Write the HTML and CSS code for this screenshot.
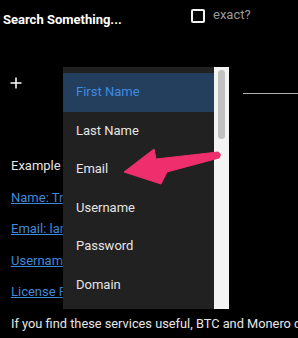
FILE: index.html
```html
<!DOCTYPE html>
<html>
<head>
<meta charset="utf-8">
<link rel="stylesheet" href="styles.css">
</head>
<body>
<div class="page">
  <header class="top">
    <span class="title">Search Something...</span>
    <label class="exact"><span class="box"></span><span class="exact-label">exact?</span></label>
  </header>
  <div class="row2">
    <svg class="plus" width="12" height="12" viewBox="0 0 12 12"><path d="M6 0.5V11.5M0.5 6H11.5" stroke="#fff" stroke-width="1.5" fill="none"/></svg>
    <span class="rule"></span>
  </div>
  <section class="content">
    <p>Example</p>
    <a href="#">Name: Trevor Smith</a>
    <a href="#">Email: larry@mail.com</a>
    <a href="#">Username: admin</a>
    <a href="#">License Plate: 7XYZ</a>
    <p class="note">If you find these services useful, BTC and Monero donations are welcome</p>
  </section>

  <div class="dropdown">
    <ul class="list">
      <li class="active">First Name</li>
      <li>Last Name</li>
      <li>Email</li>
      <li>Username</li>
      <li>Password</li>
      <li>Domain</li>
      <li>Phone</li>
    </ul>
    <div class="track"><div class="thumb"></div></div>
  </div>

  <svg class="arrow" width="298" height="338" viewBox="0 0 298 338">
    <path d="M124 172 L154 149 L156 159 L218 152 Q222 154 219 158 L167 172 L161 184 Z" fill="#ef2f6d" stroke="#ef2f6d" stroke-width="1" stroke-linejoin="round"/>
  </svg>
</div>
</body>
</html>
```
FILE: styles.css
```css
html, body {
  margin: 0;
  padding: 0;
  background: #000;
}
body {
  font-family: Roboto, "Noto Sans", sans-serif;
  font-size: 13px;
  color: #e6e6e6;
  width: 298px;
  height: 338px;
  overflow: hidden;
}
.page {
  position: relative;
  width: 298px;
  height: 338px;
  overflow: hidden;
}
.top {
  display: grid;
  grid-template-columns: 191px auto;
  height: 34px;
}
.title {
  padding: 12px 0 0 3px;
  font-weight: 700;
  line-height: 16px;
  color: #fff;
}
.exact {
  display: flex;
  align-items: flex-start;
  padding-top: 9px;
}
.box {
  width: 10px;
  height: 10px;
  border: 2px solid #f2f2f2;
  border-radius: 2px;
}
.exact-label {
  margin: -2px 0 0 8px;
  line-height: 16px;
  color: #9a9a9a;
  font-size: 13px;
}
.row2 {
  display: flex;
  align-items: flex-start;
  justify-content: space-between;
  margin-top: 43px;
  height: 24px;
  padding-left: 10px;
}
.plus {
  display: block;
}
.rule {
  width: 55px;
  height: 1px;
  margin-top: 16px;
  background: #b0b0b0;
}
.content {
  display: flex;
  flex-direction: column;
  align-items: flex-start;
  gap: 15.6px;
  margin-top: 57px;
  padding-left: 11px;
}
.content p, .content a {
  margin: 0;
  line-height: 16px;
  white-space: nowrap;
}
.content a {
  color: #3f8bdb;
  text-decoration: underline;
}
.note {
  color: #e6e6e6;
  font-size: 12.8px;
}
.dropdown {
  position: absolute;
  left: 63px;
  top: 67px;
  width: 166px;
  height: 242px;
  display: flex;
  box-shadow: 0 2px 6px rgba(0,0,0,0.5);
}
.list {
  flex: 1;
  margin: 0;
  padding: 6px 0 0;
  list-style: none;
  background: #212121;
  overflow: hidden;
}
.list li {
  height: 38.6px;
  line-height: 38.6px;
  padding-left: 13px;
  color: #e4e4e4;
  font-size: 13px;
}
.list li.active {
  background: #243f5e;
  color: #3f8be0;
}
.track {
  width: 15px;
  background: #f3f3f3;
  position: relative;
}
.thumb {
  position: absolute;
  left: 4px;
  top: 3px;
  width: 7px;
  height: 69px;
  border-radius: 4px;
  background: #c1c1c1;
}
.arrow {
  position: absolute;
  left: 0;
  top: 0;
  pointer-events: none;
}
```
